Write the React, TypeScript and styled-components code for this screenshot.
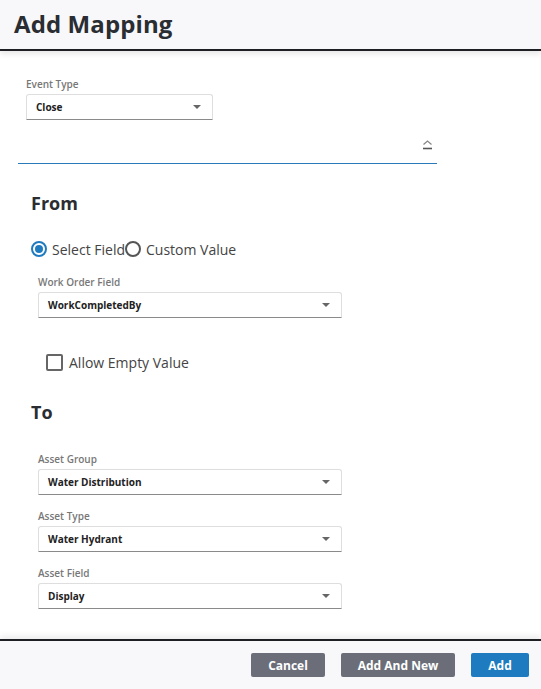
import React, { useState } from "react";
import styled, { createGlobalStyle } from "styled-components";

const Global = createGlobalStyle`
  html, body { margin: 0; padding: 0; }
  body { font-family: "Open Sans", "Liberation Sans", sans-serif; background: #fff; }
  * { box-sizing: border-box; }
`;

const Page = styled.div`
  width: 541px;
  height: 689px;
  display: flex;
  flex-direction: column;
  background: #fff;
  overflow: hidden;
`;

const Header = styled.header`
  height: 51px;
  flex: none;
  display: flex;
  align-items: center;
  padding: 0 0 2px 14px;
  background: #f8f8fa;
  border-bottom: 2px solid #1e1f22;
  box-shadow: 0 3px 6px rgba(0, 0, 0, 0.1);
  position: relative;
  z-index: 1;
`;

const Title = styled.h1`
  margin: 0;
  font-size: 24px;
  font-weight: 700;
  color: #2a2d32;
  letter-spacing: 0.1px;
`;

const Body = styled.main`
  flex: 1;
  padding: 0 0 0 18px;
  display: flex;
  flex-direction: column;
`;

const Field = styled.div<{ $indent: number; $width: number; $top: number }>`
  display: flex;
  flex-direction: column;
  gap: 4px;
  margin: ${(p) => p.$top}px 0 0 ${(p) => p.$indent}px;
  width: ${(p) => p.$width}px;
`;

const Label = styled.label`
  font-size: 10px;
  line-height: 12px;
  font-weight: 600;
  color: #777;
`;

const SelectBox = styled.div`
  height: 26px;
  display: flex;
  align-items: center;
  justify-content: space-between;
  padding: 0 11px 0 9px;
  background: #fff;
  border: 1px solid #dedede;
  border-bottom: 1px solid #8a8a8a;
  border-radius: 3px 3px 0 0;
  font-size: 10px;
  font-weight: 700;
  color: #222;
`;

const Caret = styled.span`
  width: 0;
  height: 0;
  border-left: 4px solid transparent;
  border-right: 4px solid transparent;
  border-top: 4px solid #666;
`;

const Expander = styled.div`
  width: 419px;
  height: 44px;
  display: flex;
  align-items: flex-end;
  justify-content: flex-end;
  padding: 0 4px 13px 0;
  border-bottom: 1px solid #2a7ab9;
`;

const Section = styled.section<{ $top: number }>`
  display: flex;
  flex-direction: column;
  padding-left: 13px;
  margin-top: ${(p) => p.$top}px;
`;

const Heading = styled.h2`
  margin: 0;
  font-size: 18px;
  line-height: 24px;
  font-weight: 700;
  color: #2a2d32;
`;

const RadioRow = styled.div`
  display: flex;
  align-items: center;
  height: 20px;
  margin-top: 24px;
`;

const RadioItem = styled.label`
  display: flex;
  align-items: center;
  gap: 5px;
  font-size: 14px;
  color: #444;
  cursor: pointer;
`;

const RadioCircle = styled.span<{ $on: boolean }>`
  width: 16px;
  height: 16px;
  border-radius: 50%;
  border: 2px solid ${(p) => (p.$on ? "#1f7bc0" : "#555")};
  display: flex;
  align-items: center;
  justify-content: center;
  &::after {
    content: "";
    width: 8px;
    height: 8px;
    border-radius: 50%;
    background: ${(p) => (p.$on ? "#1f7bc0" : "transparent")};
  }
`;

const CheckRow = styled.label`
  display: flex;
  align-items: center;
  gap: 6px;
  height: 20px;
  margin: 34px 0 0 15px;
  font-size: 14px;
  color: #444;
`;

const Box = styled.span`
  width: 17px;
  height: 17px;
  border: 2px solid #666;
  border-radius: 2px;
`;

const Footer = styled.footer`
  height: 50px;
  flex: none;
  display: flex;
  align-items: center;
  justify-content: flex-end;
  gap: 16px;
  padding: 0 12px 0 0;
  background: #f8f8fa;
  border-top: 2px solid #1e1f22;
  box-shadow: 0 -3px 6px rgba(0, 0, 0, 0.08);
`;

const Button = styled.button<{ $primary?: boolean; $w: number }>`
  width: ${(p) => p.$w}px;
  height: 24px;
  border: none;
  border-radius: 2px;
  background: ${(p) => (p.$primary ? "#1f7bc0" : "#6b6e79")};
  color: #fff;
  font-family: "Open Sans", "Liberation Sans", sans-serif;
  font-size: 12px;
  font-weight: 700;
  cursor: pointer;
`;

function Select({ value }: { value: string }) {
  return (
    <SelectBox>
      <span>{value}</span>
      <Caret />
    </SelectBox>
  );
}

export default function App() {
  const [mode, setMode] = useState("field");
  return (
    <Page>
      <Global />
      <Header>
        <Title>Add Mapping</Title>
      </Header>
      <Body>
        <Field $indent={8} $width={187} $top={27}>
          <Label>Event Type</Label>
          <Select value="Close" />
        </Field>
        <Expander>
          <svg width="11" height="10" viewBox="0 0 11 10">
            <polyline points="1.5,4.5 5.5,1 9.5,4.5" fill="none" stroke="#888" strokeWidth="1.3" />
            <line x1="1" y1="8.5" x2="10" y2="8.5" stroke="#555" strokeWidth="1.6" />
          </svg>
        </Expander>
        <Section $top={27}>
          <Heading>From</Heading>
          <RadioRow>
            <RadioItem onClick={() => setMode("field")}>
              <RadioCircle $on={mode === "field"} />
              Select Field
            </RadioItem>
            <RadioItem onClick={() => setMode("custom")}>
              <RadioCircle $on={mode === "custom"} />
              Custom Value
            </RadioItem>
          </RadioRow>
          <Field $indent={7} $width={304} $top={17}>
            <Label>Work Order Field</Label>
            <Select value="WorkCompletedBy" />
          </Field>
          <CheckRow>
            <Box />
            Allow Empty Value
          </CheckRow>
        </Section>
        <Section $top={28}>
          <Heading>To</Heading>
          <Field $indent={7} $width={304} $top={29}>
            <Label>Asset Group</Label>
            <Select value="Water Distribution" />
          </Field>
          <Field $indent={7} $width={304} $top={15}>
            <Label>Asset Type</Label>
            <Select value="Water Hydrant" />
          </Field>
          <Field $indent={7} $width={304} $top={15}>
            <Label>Asset Field</Label>
            <Select value="Display" />
          </Field>
        </Section>
      </Body>
      <Footer>
        <Button $w={74}>Cancel</Button>
        <Button $w={114}>Add And New</Button>
        <Button $w={58} $primary>Add</Button>
      </Footer>
    </Page>
  );
}
